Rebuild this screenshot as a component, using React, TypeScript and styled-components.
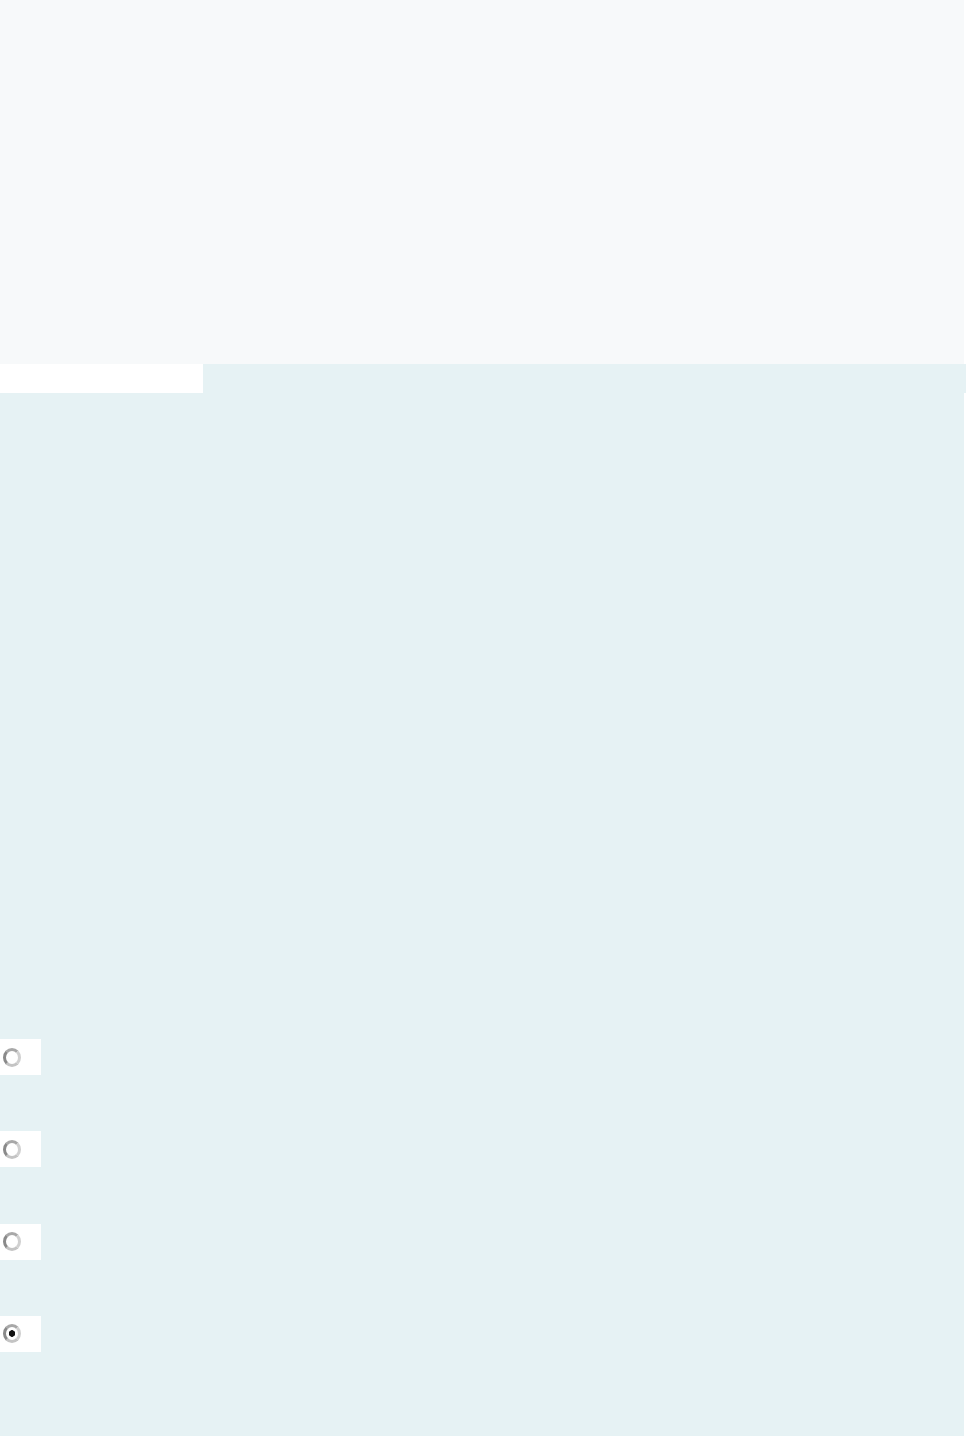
import React from 'react';
import styled, { createGlobalStyle } from 'styled-components';

const GlobalStyle = createGlobalStyle`
  html, body {
    margin: 0;
    padding: 0;
    background: #ffffff;
    font-family: "Liberation Sans", Arial, sans-serif;
  }
`;

const Page = styled.div`
  width: 966px;
  display: flex;
  flex-direction: column;
`;

const Header = styled.header`
  width: 964px;
  height: 364px;
  background: #f7f9fa;
`;

const TabBar = styled.nav`
  display: flex;
  width: 966px;
  height: 29px;
  background: #e6f2f4;
`;

const Tab = styled.div<{ $active?: boolean }>`
  width: 203px;
  height: 100%;
  background: ${(p) => (p.$active ? '#ffffff' : 'transparent')};
`;

const Main = styled.main`
  width: 964px;
  height: 1043px;
  background: #e6f2f4;
  box-sizing: border-box;
  padding-top: 646px;
  display: flex;
  flex-direction: column;
  gap: 56.33px;
`;

const OptionBox = styled.label`
  width: 41px;
  height: 36px;
  background: #ffffff;
  display: flex;
  align-items: center;
  padding-left: 3px;
  box-sizing: border-box;
`;

// greyish ring like the blurred native radio in the shot
const Radio = styled.input.attrs({ type: 'radio', name: 'choice' })`
  appearance: none;
  -webkit-appearance: none;
  width: 18px;
  height: 19px;
  margin: 0;
  border-radius: 50%;
  box-sizing: border-box;
  border: 3px solid #d0d0d0;
  border-left-color: #8a8a8a;
  border-top-color: #a8a8a8;
  border-bottom-color: #c4c4c4;
  background: #ffffff;

  &:checked {
    background: radial-gradient(circle, #111 0 3px, #fff 3.5px);
  }
`;

const options = ['a', 'b', 'c', 'd'];

const App = () => {
  return (
    <Page>
      <GlobalStyle />
      <Header />
      <TabBar>
        <Tab $active />
      </TabBar>
      <Main>
        {options.map((o) => (
          <OptionBox key={o}>
            <Radio value={o} defaultChecked={o === 'd'} />
          </OptionBox>
        ))}
      </Main>
    </Page>
  );
};

export default App;
